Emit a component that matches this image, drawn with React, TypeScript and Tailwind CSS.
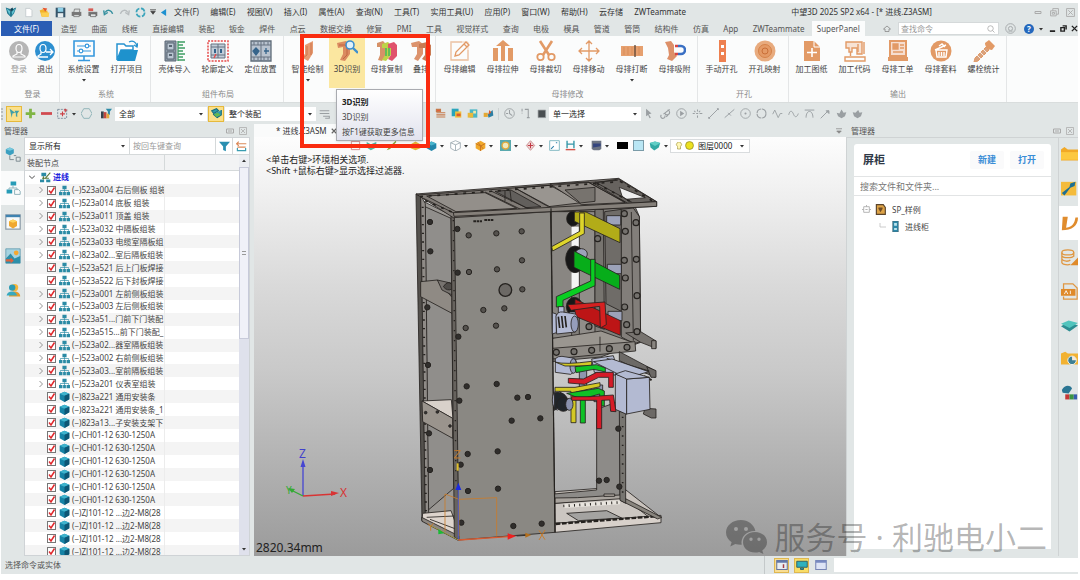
import React from "react";
import type { ReactNode } from "react";

type SvgProps = { box?: string; className?: string; children: ReactNode };

function Svg({ box = "0 0 16 16", className = "size-3", children }: SvgProps) {
  return (
    <svg viewBox={box} className={`${className} shrink-0`} fill="none" aria-hidden="true">
      {children}
    </svg>
  );
}

function Caret({ className = "size-1" }: { className?: string }) {
  return (
    <Svg box="0 0 8 8" className={className}>
      <path d="M0 2h8L4 7z" fill="#333" />
    </Svg>
  );
}

function SelectBox({ label, value, className }: { label: string; value: string; className: string }) {
  return (
    <div className={`grid shrink-0 items-center bg-white ${className}`}>
      <select aria-label={label} className="col-start-1 row-start-1 h-full w-full min-w-0 appearance-none bg-transparent pl-1 text-[8px] leading-3 text-[#222]">
        <option>{value}</option>
      </select>
      <span className="pointer-events-none col-start-1 row-start-1 mr-1 justify-self-end">
        <Caret />
      </span>
    </div>
  );
}

/* ---------- title bar ---------- */

const quickIcons: { name: string; art: ReactNode }[] = [
  { name: "新建", art: <path d="M4 2h6l3 3v9H4z" fill="#fff" stroke="#b9c0c4" /> },
  {
    name: "打开",
    art: (
      <>
        <path d="M1 5l5-2 2 2h4l2 9H4z" fill="#f3b32b" />
        <path d="M3 8h12l-1 6H4z" fill="#fccf52" />
        <path d="M5 1l7 1-3 5z" fill="#e8542a" />
      </>
    ),
  },
  {
    name: "保存",
    art: (
      <>
        <path d="M1 1h14v14H1z" fill="#37566b" />
        <path d="M4 1h8v6H4z" fill="#8ed0e8" />
        <path d="M4 9h8v6H4z" fill="#e8eef0" />
      </>
    ),
  },
  {
    name: "打印",
    art: (
      <>
        <path d="M1 7h14v6H1z" fill="#777" />
        <path d="M5 3h8l-1 5H4zM4 11h8v3H4z" fill="#d8dcdc" stroke="#666" />
      </>
    ),
  },
  {
    name: "批量打印",
    art: (
      <>
        <path d="M2 2h7v4H2z" fill="#d65b54" />
        <path d="M2 7h13v6H2z" fill="#777" />
        <path d="M5 10h8v4H5z" fill="#e2e5e5" stroke="#555" />
      </>
    ),
  },
  { name: "撤销", art: <path d="M3 8c3-5 9-4 11 2M1 5l1 6 5-3" stroke="#35909f" strokeWidth="2" /> },
  { name: "重做", art: <path d="M13 8C10 3 4 4 2 10M15 5l-1 6-5-3" stroke="#b7bcbe" strokeWidth="2" /> },
  { name: "刷新", art: <circle cx="8" cy="8" r="6" stroke="#3ba4bb" strokeWidth="2.4" strokeDasharray="7 2.4" /> },
];

const menus = ["文件(F)", "编辑(E)", "视图(V)", "插入(I)", "属性(A)", "查询(N)", "工具(T)", "实用工具(U)", "应用(P)", "窗口(W)", "帮助(H)", "云存储", "ZWTeammate"];

function TitleBar() {
  return (
    <header className="flex h-[18px] shrink-0 items-center text-[8px] leading-3 text-[#333]">
      <span className="flex w-[19px] shrink-0 justify-center">
        <Svg>
          <path d="M1 2l6 2v4l5-5 3-1-3 8-4 5-5-5z" fill="#22788f" />
          <path d="M2 3l5 4-1 5zM9 8l5-5-4 9z" fill="#65c5d4" />
          <path d="M7 4l3-2 1 3-4 3z" fill="#0c4257" />
        </Svg>
      </span>
      {quickIcons.map((q) => (
        <button key={q.name} aria-label={q.name} className="flex w-4 shrink-0 justify-center">
          <Svg className="size-[11px]">{q.art}</Svg>
        </button>
      ))}
      <button aria-label="自定义" className="flex w-[10px] shrink-0 justify-center">
        <Svg box="0 0 8 8" className="size-[6px]">
          <path d="M0 1h8M1 3h6L4 7z" stroke="#444" fill="#444" />
        </Svg>
      </button>
      <button aria-label="折叠" className="mr-[6px] flex w-[10px] shrink-0 justify-center">
        <Svg box="0 0 8 8" className="size-[7px]">
          <path d="M7 0v8L1 4z" fill="#1d91d0" />
        </Svg>
      </button>
      <nav className="flex w-[512px] shrink-0 justify-between">
        {menus.map((m) => (
          <button key={m} className="whitespace-nowrap">
            {m}
          </button>
        ))}
      </nav>
      <h1 className="mr-[98px] ml-auto shrink-0 whitespace-nowrap">中望3D 2025 SP2 x64 - [* 进线.Z3ASM]</h1>
      <button aria-label="最小化" className="flex w-4 shrink-0 justify-center">
        <Svg className="size-2">
          <path d="M2 7h12v4H2z" stroke="#aaa" strokeWidth="2" />
        </Svg>
      </button>
      <button aria-label="还原" className="flex w-4 shrink-0 justify-center">
        <Svg className="size-[9px]">
          <path d="M1 5h10v9H1zM5 5V1h10v10h-4M4 8h4v3H4z" stroke="#aaa" strokeWidth="1.6" />
        </Svg>
      </button>
      <button aria-label="关闭" className="flex w-4 shrink-0 justify-center">
        <Svg className="size-[9px]">
          <path d="M1 1h14v14H1zM4 4l8 8M12 4l-8 8" stroke="#aaa" strokeWidth="1.6" />
        </Svg>
      </button>
    </header>
  );
}

/* ---------- ribbon tabs ---------- */

const tabs = ["造型", "曲面", "线框", "直接编辑", "装配", "钣金", "焊件", "点云", "数据交换", "修复", "PMI", "工具", "视觉样式", "查询", "电极", "模具", "管道", "管筒", "结构件", "仿真", "App", "ZWTeammate"];

function TabBar() {
  return (
    <div className="flex h-[15px] shrink-0 items-stretch text-[8px] leading-3 text-[#555]">
      <button className="mr-[2px] w-[51px] shrink-0 bg-[#2a5db4] text-white">文件(F)</button>
      <nav className="flex w-[811px] shrink-0 justify-between">
        {tabs.map((t) => (
          <button key={t} className="shrink-0 px-[7px] whitespace-nowrap">
            {t}
          </button>
        ))}
        <button className="shrink-0 bg-[#fbfcfc] px-[5px] whitespace-nowrap">SuperPanel</button>
      </nav>
      <div className="ml-auto flex shrink-0 items-center">
        <button aria-label="主页" className="mr-[7px]">
          <Svg className="size-2">
            <path d="M1 8l7-6 7 6h-3v5H4V8z" stroke="#888" strokeWidth="1.6" />
          </Svg>
        </button>
        <div className="flex h-[13px] w-[101px] items-center border border-[#d5d9da] bg-white pr-[3px]">
          <input aria-label="查找命令" placeholder="查找命令" className="min-w-0 flex-1 bg-transparent pl-[2px] text-[8px] leading-3 placeholder:text-[#999]" />
          <Svg className="size-2">
            <circle cx="7" cy="7" r="5.5" stroke="#aaa" strokeWidth="1.6" />
            <path d="M11 11l4 4" stroke="#aaa" strokeWidth="1.6" />
          </Svg>
        </div>
        <button aria-label="反馈" className="mr-2 ml-[6px]">
          <Svg className="size-[11px]">
            <circle cx="8" cy="8" r="7" stroke="#a5aaac" strokeWidth="1.4" />
            <circle cx="8" cy="8" r="3" stroke="#a5aaac" strokeWidth="1.4" />
            <path d="M4 11c2 2 6 2 8 0" stroke="#a5aaac" />
          </Svg>
        </button>
        <button aria-label="帮助" className="mr-[5px] flex size-[10px] items-center justify-center rounded-full bg-[#2468bd] text-[8px] leading-none font-bold text-white">
          ?
        </button>
        <Caret />
        <button aria-label="最小化文档" className="ml-[6px]">
          <Svg box="0 0 8 8" className="size-[7px]">
            <path d="M1 7h6" stroke="#222" strokeWidth="2" />
          </Svg>
        </button>
        <button aria-label="还原文档" className="ml-1">
          <Svg box="0 0 8 8" className="size-[7px]">
            <path d="M1 3h4v4H1zM3 1h4v4" stroke="#222" strokeWidth="1.6" />
          </Svg>
        </button>
        <button aria-label="关闭文档" className="ml-1">
          <Svg box="0 0 8 8" className="size-[7px]">
            <path d="M1 1l6 6M7 1L1 7" stroke="#222" strokeWidth="1.6" />
          </Svg>
        </button>
      </div>
    </div>
  );
}

/* ---------- ribbon ---------- */

const O = "#e29a66";

const art = {
  user: (
    <>
      <circle cx="11" cy="11" r="10" fill="#b5b5b5" />
      <ellipse cx="11" cy="8.5" rx="3" ry="4" stroke="#fff" strokeWidth="1.2" />
      <path d="M9 12v2l-4 2v1h12v-1l-4-2v-2" stroke="#fff" strokeWidth="1.2" />
    </>
  ),
  logout: (
    <>
      <circle cx="11" cy="11" r="10" fill="#2d8fd0" />
      <ellipse cx="9" cy="8.5" rx="3" ry="4" stroke="#fff" strokeWidth="1.2" />
      <path d="M7 12v2l-3 2v1h10M12 12h7M16 9l3 3-3 3" stroke="#fff" strokeWidth="1.3" />
    </>
  ),
  settings: (
    <>
      <path d="M1 1h20v15H1zM11 16v4M5 20.500h12" stroke="#3798dd" strokeWidth="1.6" />
      <path d="M4 6h14M4 11h14" stroke="#3798dd" strokeWidth="1.2" />
      <circle cx="14" cy="6" r="1.8" fill="#fff" stroke="#3798dd" strokeWidth="1.2" />
      <circle cx="8" cy="11" r="1.8" fill="#fff" stroke="#3798dd" strokeWidth="1.2" />
    </>
  ),
  folder: (
    <>
      <path d="M1 20V4h7l2 2h7v4H5z" fill="#fff" stroke="#2793cf" strokeWidth="1.5" />
      <path d="M5 10h17l-3 11H1z" fill="#1e92cd" />
      <path d="M13 2c4-2 7 0 8 4M22 3l-1 4-3-2" stroke="#2793cf" strokeWidth="1.3" />
    </>
  ),
  shell: (
    <>
      <path d="M1 1h11v20H1z" fill="#8d99a6" stroke="#5a6674" />
      <path d="M3 3h7v7H3zM3 12h7v7H3z" fill="#bac6d2" stroke="#5a6674" />
      <path d="M5 6h3M5 15h3" stroke="#394653" strokeWidth="1.5" />
      <path d="M14 1v20M14 2h7M14 5h5M14 8h7M14 11h5M14 14h7M14 17h5M14 20h7" stroke="#3f9d63" strokeWidth="1.3" />
    </>
  ),
  outline: (
    <>
      <path d="M1 1h20v20H1z" stroke="#e64a4a" strokeWidth="1.5" strokeDasharray="2 1.2" />
      <path d="M4 4h14v14H4z" fill="#c2ced9" stroke="#667381" />
      <path d="M11 4v14M4 7h14M4 15h14" stroke="#667381" />
      <path d="M7 9h2v4H7zM13 9h2v4h-2z" fill="#35648b" />
      <path d="M7 18l2-4" stroke="#e64a4a" strokeWidth="1.4" />
    </>
  ),
  place: (
    <>
      <path d="M1 1h20v20H1z" fill="#b8c3cf" stroke="#5f6c79" strokeWidth="1.3" />
      <path d="M11 1v20M1 5h20M1 17h20M4 2v3M8 2v3M14 2v3M18 2v3M4 17v3M8 17v3M14 17v3M18 17v3" stroke="#667381" />
      <path d="M6 8l3 3-3 4-3-4zM16 8v6M14 11h5" fill="#35648b" stroke="#35648b" strokeWidth="1.3" />
    </>
  ),
  smart: (
    <>
      <path d="M8 5l8-4v12l-5 8-7-4 4-3z" fill="#e59b72" />
      <path d="M10 6v9l-4 3M14 3v12" stroke="#cf754a" />
    </>
  ),
  recog: (
    <>
      <path d="M1 3l9-2 4 4v9l-5 7-5-1 3-6V7L2 8z" fill="#db8b60" />
      <path d="M3 5h6l2 2v8l-4 4" stroke="#c26740" />
      <circle cx="14" cy="5" r="4" fill="#dff1fb" stroke="#3e8fce" strokeWidth="1.6" />
      <path d="M17 8l5 5" stroke="#3e8fce" strokeWidth="2.4" />
    </>
  ),
  copy: (
    <>
      <path d="M1 3l6-2 3 3v11l-4 6-4-1 2-5V7H1z" fill="#d69167" />
      <path d="M6 4l6-2 3 3v10l-5 6-4-1 3-5V8H6z" fill="#bed347" />
      <path d="M12 4l6-2 3 3v11l-5 5-4-2 3-4V8h-3z" fill="#e0526c" />
      <path d="M10 8v8M13 8v8" stroke="#45b65b" strokeWidth="1.5" />
    </>
  ),
  stack: (
    <>
      <path d="M1 3l8-2 4 3v10l-5 7-4-2 3-5V7H2z" fill="#dc936d" />
      <path d="M9 4l8-2 4 3v10l-5 6-4-2 3-4V8H9z" fill="#c97a53" />
    </>
  ),
  edit: (
    <>
      <path d="M19 10v10H2V2h11" stroke="#eabd9b" strokeWidth="1.3" />
      <path d="M2 2h17v18" stroke="#f0d2bd" />
      <path d="M6 16l1-4L17 2l3 3L10 15zM15 4l3 3" stroke={O} strokeWidth="1.3" />
    </>
  ),
  stretch: <path d="M11 0l7 6H4zM1 8h5v13H1zM9 5h4v16H9zM16 8h5v13h-5z" fill={O} />,
  scissors: (
    <>
      <path d="M5 1l9 14M17 1L8 15" stroke={O} strokeWidth="2.6" />
      <circle cx="5.500" cy="17" r="3.200" stroke={O} strokeWidth="1.8" />
      <circle cx="16.500" cy="17" r="3.200" stroke={O} strokeWidth="1.8" />
    </>
  ),
  move: <path d="M11 1v20M1 11h20M8 4l3-3 3 3M8 18l3 3 3-3M4 8l-3 3 3 3M18 8l3 3-3 3" stroke={O} strokeWidth="1.3" />,
  brk: (
    <>
      <path d="M0 6h22v10H0z" fill="#e6a06f" />
      <path d="M14 5v12" stroke="#5c4535" strokeWidth="1.300" />
      <path d="M3 7v8M7 7v8M11 7v8M18 7v8" stroke="#d98d58" />
    </>
  ),
  snap: (
    <>
      <path d="M1 2l6-1 3 4v7l3 4-5 5-5-2 2-4-1-7z" fill="#dd9069" />
      <path d="M14 6h3a4 4 0 0 1 0 8h-3" stroke="#3a70c4" strokeWidth="2.6" />
      <path d="M11 6h3M11 14h3" stroke="#d84444" strokeWidth="2.6" />
    </>
  ),
  hole: (
    <>
      <path d="M8 0h7v22H8z" fill="#ee8050" />
      <path d="M10 5h3v3h-3zM10 12h3v3h-3z" fill="#fff" />
    </>
  ),
  map: (
    <>
      <circle cx="11" cy="11" r="10.500" fill="#e8ab7e" />
      <circle cx="11" cy="11" r="6.500" fill="#e49a66" stroke="#d58249" />
      <circle cx="11" cy="11" r="3" stroke="#c96f38" />
    </>
  ),
  sheet: (
    <>
      <path d="M3 1h10l6 6v14H3z" fill={O} />
      <path d="M13 1v6h6" stroke="#fff" />
      <path d="M11 8v9M6 12.500h10" stroke="#fff" strokeWidth="1.600" />
    </>
  ),
  sewing: (
    <>
      <path d="M2 2h16v12h-5V8H8v4H5V8H2z" fill="#f7e3d5" stroke={O} strokeWidth="1.400" />
      <path d="M1 17h20v4H1zM20 2v12M6.500 12v4M14 4v8" stroke={O} strokeWidth="1.400" />
    </>
  ),
  order: (
    <>
      <path d="M3 1h16v15H3z" fill="#f6ded0" stroke={O} strokeWidth="2" />
      <path d="M6 4h5v5H6zM13 5h4M13 8h4M6 12h10" fill={O} stroke={O} strokeWidth="1.300" />
      <path d="M1 17h20v4H1z" fill={O} />
    </>
  ),
  nest: (
    <>
      <circle cx="11" cy="11" r="10.500" fill={O} />
      <path d="M5 10l11-5M6 10h11l-1 7H7zM9 12v4M11.500 12v4M14 12v4M9 6l3-2 3 3" stroke="#fff" strokeWidth="1.400" />
    </>
  ),
  bolt: (
    <>
      <path d="M12 3l4-3 6 6-3 4c-4 0-7-3-7-7z" fill={O} />
      <path d="M13 7l3 3L5 21l-4 1 1-4z" fill="#dba27c" stroke={O} />
      <path d="M10 9l4 4M7 12l4 4M4 15l4 4" stroke="#fff" strokeWidth=".8" />
    </>
  ),
};

type Tool = { label: string; icon: ReactNode; w?: string; drop?: boolean; on?: boolean; dim?: boolean };

function ToolButton({ label, icon, w = "w-[43px]", drop, on, dim }: Tool) {
  return (
    <button className={`flex h-[52px] shrink-0 flex-col items-center pt-1 ${w} ${on ? "bg-[#fbe7a0]" : ""}`}>
      <Svg box="0 0 22 22" className="size-[22px]">
        {icon}
      </Svg>
      <span className={`mt-[2px] text-[8px] leading-[10px] whitespace-nowrap ${dim ? "text-[#999]" : "text-[#444]"}`}>{label}</span>
      {drop && (
        <span className="mt-1">
          <Caret />
        </span>
      )}
    </button>
  );
}

function Group({ title, tools, className }: { title: string; tools: Tool[]; className: string }) {
  return (
    <section className={`flex shrink-0 flex-col overflow-hidden border-r border-[#e4e6e7] ${className}`}>
      <div className="flex">
        {tools.map((t) => (
          <ToolButton key={t.label} {...t} />
        ))}
      </div>
      <h2 className="text-center text-[8px] leading-3 text-[#8a8a8a]">{title}</h2>
    </section>
  );
}

function Ribbon() {
  return (
    <div className="flex h-[67px] shrink-0 overflow-hidden border-b border-[#d9dddd] bg-[#fbfcfc]">
      <Group
        title="登录"
        className="w-[59px] pl-[5px]"
        tools={[
          { label: "登录", icon: art.user, w: "w-[26px]", dim: true },
          { label: "退出", icon: art.logout, w: "w-[26px]" },
        ]}
      />
      <Group
        title="系统"
        className="w-[91px] pl-[2px]"
        tools={[
          { label: "系统设置", icon: art.settings, drop: true },
          { label: "打开项目", icon: art.folder },
        ]}
      />
      <Group
        title="组件布局"
        className="w-[133px] pl-[2px]"
        tools={[
          { label: "壳体导入", icon: art.shell },
          { label: "轮廓定义", icon: art.outline },
          { label: "定位放置", icon: art.place },
        ]}
      />
      <Group
        title=""
        className="w-[152px] pr-[10px] pl-[2px]"
        tools={[
          { label: "智能绘制", icon: art.smart, drop: true },
          { label: "3D识别", icon: art.recog, w: "w-9", on: true },
          { label: "母排复制", icon: art.copy },
          { label: "叠排", icon: art.stack, w: "w-[26px]" },
        ]}
      />
      <Group
        title="母排修改"
        className="w-[262px] pl-[2px]"
        tools={[
          { label: "母排编辑", icon: art.edit },
          { label: "母排拉伸", icon: art.stretch },
          { label: "母排裁切", icon: art.scissors },
          { label: "母排移动", icon: art.move },
          { label: "母排打断", icon: art.brk, drop: true },
          { label: "母排吸附", icon: art.snap },
        ]}
      />
      <Group
        title="开孔"
        className="w-[91px] pl-[2px]"
        tools={[
          { label: "手动开孔", icon: art.hole },
          { label: "开孔映射", icon: art.map },
        ]}
      />
      <Group
        title="输出"
        className="w-[218px] pl-[1px]"
        tools={[
          { label: "加工图纸", icon: art.sheet },
          { label: "加工代码", icon: art.sewing },
          { label: "母排工单", icon: art.order },
          { label: "母排套料", icon: art.nest },
          { label: "螺栓统计", icon: art.bolt },
        ]}
      />
    </div>
  );
}

/* ---------- selection toolbar ---------- */

const G = "#9a9fa2";

const colorTools: { name: string; art: ReactNode }[] = [
  { name: "列表", art: <path d="M2 2h6v3H2zM2 7h13M2 10h13M2 13h13" stroke="#c67a4b" fill="#e2623a" strokeWidth="1.6" /> },
  {
    name: "复制",
    art: (
      <>
        <path d="M1 1h10v11H1z" fill="#2aa5bb" />
        <path d="M6 5h9v9H6z" fill="#f2c13c" />
        <path d="M8 8h6v4H8z" fill="#df5a2c" />
      </>
    ),
  },
  {
    name: "粘贴",
    art: (
      <>
        <path d="M4 2h11v12H4z" fill="#49b6c6" />
        <path d="M1 7h8v7H1z" fill="#e9b93b" />
        <path d="M9 4h4v4H9z" fill="#f5e8a6" />
      </>
    ),
  },
  {
    name: "变换",
    art: (
      <>
        <path d="M1 7h6v6H1z" fill="#e5a934" />
        <path d="M7 9l7-6 1 8-7 3z" fill="#2c7fa4" />
        <path d="M9 3l3 3-4 4z" fill="#df5a2c" />
      </>
    ),
  },
];

const grayTools: { name: string; art: ReactNode }[] = [
  { name: "选取", art: <path d="M3 1l8 7-4 1 3 5-2 1-2-5-3 2z" fill={G} /> },
  { name: "设置", art: <path d="M2 10a3 3 0 1 0 5 1M7 7a3.500 3.500 0 1 0 4-4M5 9l9-7M12 10l-3 3" stroke={G} strokeWidth="1.600" /> },
  {
    name: "播放",
    art: (
      <>
        <circle cx="8" cy="8" r="7" stroke={G} strokeWidth="1.300" />
        <path d="M6 4l6 4-6 4z" fill={G} />
      </>
    ),
  },
  { name: "点", art: <path d="M1 8h3M6 8h3M11 8h4M8 2v3M8 11v3M3 4l2 2M12 4l-2 2" stroke={G} strokeWidth="1.500" /> },
  { name: "直线", art: <path d="M1 15L15 1M1 13v2h2M13 1h2v2" stroke={G} strokeWidth="1.400" /> },
  { name: "中点", art: <path d="M1 14L15 2M6 7l4 4" stroke={G} strokeWidth="1.400" /> },
  {
    name: "圆心",
    art: (
      <>
        <circle cx="8" cy="8" r="7" stroke={G} strokeWidth="1.200" />
        <circle cx="8" cy="8" r="1.500" fill={G} />
      </>
    ),
  },
  { name: "象限", art: <circle cx="8" cy="8" r="6.500" stroke={G} strokeWidth="1.600" strokeDasharray="9 1.200" /> },
  { name: "折线", art: <path d="M1 9l3-6 5 11 3-6h3" stroke={G} strokeWidth="1.300" /> },
  { name: "曲线", art: <path d="M1 10c2-8 5-6 7-1s5 5 7-1" stroke={G} strokeWidth="1.300" /> },
  { name: "切线", art: <path d="M1 3h14M3 14c0-12 10-12 10 0" stroke={G} strokeWidth="1.400" /> },
  { name: "方向", art: <path d="M1 15L12 4M9 4h4v4z" stroke={G} fill={G} strokeWidth="1.400" /> },
  { name: "曲面", art: <path d="M1 7l4 1 3-6 3 5 4-1-2 6-5 3-5-3z" fill={G} /> },
  { name: "面", art: <path d="M1 6l4 1 4-4 2 4 4-1-2 6-5 3-5-3z" fill={G} /> },
];

function ToolIcon({ name, children, className = "w-4" }: { name: string; children: ReactNode; className?: string }) {
  return (
    <button aria-label={name} className={`flex h-4 shrink-0 items-center justify-center ${className}`}>
      <Svg className="size-[11px]">{children}</Svg>
    </button>
  );
}

function SelectionBar() {
  return (
    <div className="flex h-[21px] shrink-0 items-center">
      <span className="mr-[3px] h-3 w-[2px] border-l-2 border-dotted border-[#b9bec0]" />
      <ToolIcon name="选择" className="w-4 border border-[#e6b93c] bg-[#fbe08a]">
        <path d="M1 1l8 6-4 1-1 6zM8 4h7l-3 4v5l-2-1V8z" fill="#3f9fa9" />
      </ToolIcon>
      <ToolIcon name="添加">
        <path d="M6 1h4v5h5v4h-5v5H6v-5H1V6h5z" fill="#7fb544" />
      </ToolIcon>
      <ToolIcon name="移除">
        <path d="M0 6h16v4H0z" fill="#d14a4f" />
      </ToolIcon>
      <ToolIcon name="框选">
        <path d="M1 2h13v13H1z" stroke="#5d7388" strokeDasharray="3 1.500" />
        <path d="M8 5v7M4.500 8.500h7M12 1v5M10 3h5" stroke="#cb3f44" strokeWidth="1.600" />
      </ToolIcon>
      <span className="mx-[2px]">
        <Caret />
      </span>
      <ToolIcon name="多边形">
        <path d="M4 1h8l4 7-4 7H4L0 8z" stroke="#8ab0b5" strokeWidth="1.300" />
      </ToolIcon>
      <ToolIcon name="过滤" className="ml-[3px] w-[18px]">
        <path d="M0 5h4v10H0z" fill="#35434d" />
        <path d="M4 6h4v9H4z" fill="#c4483e" />
        <path d="M8 8h4v7H8z" fill="#e2a93c" />
        <path d="M7 1h9l-3 4v5l-3-2V5z" fill="#2d8ba7" />
      </ToolIcon>
      <SelectBox label="过滤类型" value="全部" className="h-[14px] w-[92px]" />
      <ToolIcon name="装配范围" className="mx-px w-4 border border-[#e6b93c] bg-[#fbe08a]">
        <path d="M1 4l7-3 3 3-7 4zM3 9l6 5 6-4V3" fill="#2f9bab" stroke="#176c80" strokeWidth="1.500" />
        <path d="M4 9l6-2 4 3-6 3z" fill="#64b84e" />
      </ToolIcon>
      <SelectBox label="装配范围列表" value="整个装配" className="h-[14px] w-[91px]" />
      <ToolIcon name="对齐">
        <path d="M1 4h14M1 8h14M6 12h9v3H9" stroke={G} strokeWidth="1.500" />
      </ToolIcon>
      <span className="w-[100px] shrink-0" />
      {colorTools.map((t) => (
        <ToolIcon key={t.name} name={t.name}>
          {t.art}
        </ToolIcon>
      ))}
      <span className="mx-[2px] h-3 w-px shrink-0 bg-[#cdd2d3]" />
      <ToolIcon name="历史">
        <circle cx="8" cy="8" r="7" stroke={G} strokeWidth="1.300" />
        <path d="M8 3v5l4 3M3 8h3" stroke={G} strokeWidth="1.500" />
      </ToolIcon>
      <ToolIcon name="捕捉">
        <path d="M3 1v4M3 7v1M7 2h5v12M10 14h4" stroke={G} strokeWidth="1.500" />
      </ToolIcon>
      <ToolIcon name="实体">
        <path d="M3 3h11v11H3z" fill="#4a4f52" stroke="#9a9fa2" />
      </ToolIcon>
      <SelectBox label="选择方式" value="单一选择" className="h-[14px] w-[92px]" />
      {grayTools.map((t) => (
        <ToolIcon key={t.name} name={t.name}>
          {t.art}
        </ToolIcon>
      ))}
    </div>
  );
}

/* ---------- left manager ---------- */

const sideIcons: { name: string; art: ReactNode }[] = [
  {
    name: "历史",
    art: (
      <>
        <path d="M1 4l5-2 5 2v5l-5 3-5-3z" fill="#3a9fc0" />
        <path d="M1 4l5 2 5-2-5-2z" fill="#79c9dd" />
        <path d="M6 12v5h5M11 12h3M14 14h5v5h-5z" stroke="#7c8a90" strokeWidth="1.200" />
      </>
    ),
  },
  {
    name: "装配",
    art: (
      <>
        <path d="M7 2h7v5H7zM2 12h7v5H2z" fill="#279cb7" />
        <path d="M12 12h5l2 2v4h-7zM10 7v3M5 12v-2h10v2" stroke="#8fb2ba" strokeWidth="1.200" />
      </>
    ),
  },
  {
    name: "视图",
    art: (
      <>
        <path d="M1 1h18v18H1z" fill="#f8fafa" stroke="#8c9ca8" strokeWidth="1.500" />
        <path d="M1 1h18v3H1z" fill="#3f83b0" />
        <path d="M5 9l5-2 5 2v6l-5 3-5-3z" fill="#f0a830" />
        <path d="M5 9l5 2 5-2-5-2z" fill="#ffd45c" />
      </>
    ),
  },
  {
    name: "视觉",
    art: (
      <>
        <path d="M1 1h18v18H1z" fill="#a6d3e0" stroke="#5f98ad" />
        <path d="M1 13l6-6 5 6 7-3v9H1z" fill="#2d8fa9" />
        <circle cx="14" cy="6" r="3" fill="#f5a82e" />
        <path d="M1 14h6v-2l4 4-4 3v-2H1z" fill="#e0623c" />
      </>
    ),
  },
  {
    name: "用户",
    art: (
      <>
        <circle cx="12" cy="7" r="4.500" fill="#f3b53a" />
        <path d="M5 18c0-8 14-8 14 0z" fill="#e59a29" />
        <circle cx="9" cy="7" r="4" fill="#2b9bb3" />
        <path d="M2 17c1-7 12-7 13 0z" fill="#36a9bf" />
      </>
    ),
  },
];

type Node = { text: string; part?: boolean; open?: boolean };

const nodes: Node[] = [
  { text: "(−)523a004 右后侧板 组装", open: true },
  { text: "(−)523a014 底板 组装", open: true },
  { text: "(−)523a011 顶盖 组装", open: true },
  { text: "(−)523a032 中隔板组装", open: true },
  { text: "(−)523a033 电缆室隔板组", open: true },
  { text: "(−)823a02...室后隔板组装", open: true },
  { text: "(−)523a521 后上门板焊接" },
  { text: "(−)523a522 后下封板焊接" },
  { text: "(−)523a001 左前侧板组装", open: true },
  { text: "(−)523a003 左后侧板组装", open: true },
  { text: "(−)523a51...门前下门装配", open: true },
  { text: "(−)523a515...前下门装配_", open: true },
  { text: "(−)523a02...器室隔板组装", open: true },
  { text: "(−)523a002 右前侧板组装", open: true },
  { text: "(−)523a03...室前隔板组装", open: true },
  { text: "(−)523a201 仪表室组装", open: true },
  { text: "(−)823a221 通用安装条", part: true },
  { text: "(−)823a221 通用安装条_1", part: true },
  { text: "(−)823a13...子安装支架下", part: true },
  ...Array.from({ length: 6 }, () => ({ text: "(−)CH01-12 630-1250A", part: true })),
  ...Array.from({ length: 4 }, () => ({ text: "(−)ZJ101-12 ...边2-M8(28", part: true })),
];

function OrgIcon() {
  return (
    <Svg className="size-[11px]">
      <path d="M5 1h6v5H5zM0 10h5v5H0zM6 10h4v5H6zM11 10h5v5h-5z" fill="#2b8ba5" />
      <path d="M8 6v4M2 10V8h12v2" stroke="#2b8ba5" />
    </Svg>
  );
}

function CubeIcon() {
  return (
    <Svg className="size-[11px]">
      <path d="M1 4l7-3 7 3v8l-7 4-7-4z" fill="#1683a6" />
      <path d="M1 4l7-3 7 3-7 3z" fill="#3fb3cd" />
      <path d="M8 7l7-3v8l-7 4z" fill="#0d5675" />
    </Svg>
  );
}

function TreeRow({ node, index }: { node: Node; index: number }) {
  const id = `node-${index}`;
  return (
    <li className="grid min-h-0 grid-cols-[140px_1fr] odd:bg-white even:bg-[#f4f4f4]">
      <span className="flex min-w-0 items-center overflow-hidden border-r border-[#ececec] pl-[13px]">
        <span className="flex w-[9px] shrink-0">
          {node.open && (
            <Svg box="0 0 8 8" className="size-[6px]">
              <path d="M2 0l4 4-4 4" stroke="#888" strokeWidth="1.200" />
            </Svg>
          )}
        </span>
        <span className="mr-[3px] grid size-[9px] shrink-0">
          <input id={id} type="checkbox" defaultChecked className="peer col-start-1 row-start-1 size-[9px] appearance-none border border-[#777] bg-white" />
          <svg viewBox="0 0 9 9" className="pointer-events-none invisible col-start-1 row-start-1 size-[9px] peer-checked:visible" fill="none" aria-hidden="true">
            <path d="M2 4.500l2 2.500 3.500-5.500" stroke="#e0282c" strokeWidth="1.500" />
          </svg>
        </span>
        {node.part ? <CubeIcon /> : <OrgIcon />}
        <label htmlFor={id} className="ml-[2px] text-[8px] leading-3 whitespace-nowrap text-[#444]">
          {node.text}
        </label>
      </span>
    </li>
  );
}

function PanelControls() {
  return (
    <>
      <button aria-label="停靠" className="ml-auto">
        <Svg className="size-2">
          <path d="M1 4h14v8H1zM4 8h8" stroke="#aaa" strokeWidth="2" />
        </Svg>
      </button>
      <button aria-label="关闭面板" className="ml-[5px]">
        <Svg className="size-2">
          <path d="M1 1h14v14H1zM4 4l8 8M12 4l-8 8" stroke="#aaa" strokeWidth="1.500" />
        </Svg>
      </button>
    </>
  );
}

function LeftManager() {
  return (
    <aside className="flex w-[249px] shrink-0 flex-col">
      <div className="flex h-[13px] shrink-0 items-center pr-[3px] pl-[3px] text-[8px] leading-[10px] text-[#555]">
        管理器
        <PanelControls />
      </div>
      <div className="flex min-h-0 flex-1">
        <nav className="flex w-[23px] shrink-0 flex-col">
          {sideIcons.map((s) => (
            <button key={s.name} aria-label={s.name} className={`flex h-[34px] items-center justify-center ${s.name === "装配" ? "bg-[#fafbfb]" : ""}`}>
              <Svg box="0 0 20 20" className="size-4">
                {s.art}
              </Svg>
            </button>
          ))}
        </nav>
        <div className="flex min-w-0 flex-1 flex-col border border-[#cfd3d6] bg-white">
          <div className="flex h-[17px] shrink-0 border-b border-[#d5d9da]">
            <SelectBox label="显示范围" value="显示所有" className="w-[105px] border-r border-[#d5d9da]" />
            <input aria-label="按回车键查询" placeholder="按回车键查询" className="min-w-0 flex-1 px-[3px] text-[8px] leading-3 placeholder:text-[#999]" />
            <button aria-label="筛选" className="flex w-[17px] items-center justify-center border-l border-[#d5d9da]">
              <Svg className="size-[11px]">
                <path d="M0 1h16l-6 7v7l-4-2V8z" fill="#2a8fb0" />
              </Svg>
            </button>
            <button aria-label="排序" className="flex w-[17px] items-center justify-center border-l border-[#d5d9da]">
              <Svg className="size-[11px]">
                <path d="M1 4h14M4 1L1 4l3 3M2 9h12" stroke="#dc8a5a" strokeWidth="1.700" />
                <path d="M2 10v4h12v-4" stroke="#3a9db1" strokeWidth="1.700" />
              </Svg>
            </button>
          </div>
          <div className="flex min-h-0 flex-1">
            <div className="flex min-w-0 flex-1 flex-col overflow-hidden">
              <div className="grid h-4 shrink-0 grid-cols-[140px_1fr] border-b border-[#d5d9da] bg-[#f2f3f4] text-[8px] leading-[15px] text-[#444]">
                <span className="border-r border-[#d5d9da] pl-[2px]">装配节点</span>
              </div>
              <ul className="grid h-[387px] shrink-0 grid-rows-[repeat(30,minmax(0,1fr))]">
                <li className="flex min-h-0 items-center gap-[5px] pl-1 text-[8px] leading-3 font-bold text-[#2222dd]">
                  <Svg box="0 0 8 8" className="size-[6px]">
                    <path d="M0 2l4 4 4-4" stroke="#444" strokeWidth="1.300" />
                  </Svg>
                  <span className="flex items-center gap-[2px]">
                    <Svg className="size-[11px]">
                      <path d="M2 1h7v5H2zM0 11h6v4H0zM9 11h6v4H9z" fill="#2b8ba5" />
                      <path d="M5 6v5M3 9h10M15 1L7 10" stroke="#5c7a3c" strokeWidth="1.600" />
                    </Svg>
                    进线
                  </span>
                </li>
                {nodes.map((n, i) => (
                  <TreeRow key={i} node={n} index={i} />
                ))}
              </ul>
            </div>
            <div className="flex w-[10px] shrink-0 flex-col items-center bg-[#dfe1ec]">
              <button aria-label="向上滚动" className="flex h-[12px] w-full rotate-180 items-center justify-center bg-[#eceef2]">
                <Caret />
              </button>
              <div className="flex h-[172px] w-[10px] items-center justify-center border border-[#c7cad9] bg-[#f0f1f8]">
                <span className="h-1 w-1 border-y border-[#999]" />
              </div>
              <button aria-label="向下滚动" className="mt-auto flex h-3 w-full items-center justify-center">
                <Caret />
              </button>
            </div>
          </div>
        </div>
      </div>
    </aside>
  );
}

/* ---------- cabinet model ---------- */

const frontBolts = [
  [206, 196], [289, 190], [365, 184], [366, 271], [291, 298], [207, 306], [367, 358], [250, 420], [313, 415], [197, 474], [288, 467],
];
const darkBolts = [
  [172, 177], [173, 308], [175, 500], [200, 649], [290, 642], [352, 683], [384, 681], [335, 752], [421, 745], [178, 692], [203, 852], [293, 844],
  [182, 884], [204, 963], [294, 956], [184, 1058], [340, 1068], [425, 1061], [620, 930], [597, 932], [655, 776], [658, 950],
  [90, 156], [91, 244], [82, 412], [84, 585], [87, 790], [90, 900],
];
const rimBolts = [
  [708, 158], [709, 268], [711, 377], [711, 485], [593, 206], [469, 547], [522, 545], [575, 541], [628, 536], [681, 532], [567, 470],
  [673, 131], [676, 184], [673, 271], [676, 324], [674, 411], [680, 464],
];

function Cabinet() {
  return (
    <svg viewBox="254 137 592 418" preserveAspectRatio="xMinYMin meet" className="absolute inset-0 size-full" fill="none" aria-hidden="true">
      <g transform="translate(400 170) scale(0.33333)" stroke="#25221f" strokeWidth="2.500" strokeLinejoin="round">
        {/* lower floor frame */}
        <path d="M465 965l200-15 118 92-318 30z" fill="#c9c3bd" />
        <path d="M465 1000l205-18 75 58-280 20z" fill="#cbc6c1" />
        <path d="M500 1030l120-8 45 22-130 8z" fill="#a4a3a1" />
        <path d="M465 1060l318-24v22l-318 29z" fill="#d8d1cb" />
        <path d="M467 1062l300-23" strokeWidth="7" strokeDasharray="14 5" />
        <path d="M465 974l200-13v25l-200 14z" fill="#a8a39d" />
        <path d="M490 1008l170-11" stroke="#e8e4de" strokeWidth="12" />
        <path d="M490 1008l170-11" strokeWidth="8" strokeDasharray="3 13" />
        <path d="M665 980l120 62-12 5-110-55z" fill="#89857e" />
        {/* lower back panel and post */}
        <path d="M590 718l70-25v282l-128 8-70 1v-12l128-12z" fill="#8d8b88" />
        <path d="M658 725h19v275l-17-9z" fill="#777570" />
        <path d="M668 740v230" strokeWidth="5" strokeDasharray="4 24" />
        <path d="M612 972h32v7h-32z" fill="#aaa59e" />
        {/* upper back panels */}
        <path d="M453 110l250-5 15 34 4 378-120 44-149 14z" fill="#817e7a" />
        <path d="M453 125h62v380h-62z" fill="#898682" />
        <path d="M514 170h24v190h-24z" fill="#f4f4f4" stroke="none" />
        <path d="M538 125h47v370h-47z" fill="#908d89" />
        <path d="M585 118h25l3 360-28-10z" fill="#77746f" />
        <path d="M614 125l50-7 4 308-50-25z" fill="#6f6c68" />
        <path d="M664 118l36-4 18 26 4 375-20 6-38-20z" fill="#827e7a" />
        <path d="M694 126l6 386" />
        <path d="M722 485l46 28v22l-46-18-45-28z" fill="#77736f" />
        <path d="M755 512h13v24h-13z" fill="#8a8681" />
        {/* partition shelf */}
        <path d="M458 505l145-22 100 36-248 22z" fill="#9a9690" />
        <path d="M457 535l248-20 2 28-249 24z" fill="#8e8a85" />
        {/* lower mount rails */}
        <path d="M600 500v45M658 545l107 57v20l-107-50z" fill="#6c6966" />
        <path d="M620 560l140 73" strokeWidth="6" strokeDasharray="8 10" />
        <path d="M740 590l28 12v20h-15zM735 715l33 2v27h-14l-24-12z" fill="#6c6966" />
        {/* left side */}
        <path d="M62 90l96 48 15 960-92-70z" fill="#9a9793" />
        <path d="M75 110l78 35 8 810-76 65z" fill="#908e8b" />
        <path d="M48 72l14 3 15 975-11 1z" fill="#54514d" />
        <path d="M62 75l14 26 10 938-10 12z" fill="#8f8b87" />
        <path d="M68 110l10 930" strokeWidth="6" strokeDasharray="4 22" />
        <path d="M62 335l50-5 44 52v48l-94-50z" fill="#8f8a84" />
        <path d="M112 330l44 10v35l-30-15z" fill="#77736f" />
        <path d="M130 350q15-22 26-5v12q-14 8-26-7z" fill="#4f4c49" />
        <path d="M66 693l88-4 5 57z" fill="#d8d1ca" />
        <path d="M66 693l92 52v60l-90-50z" fill="#9a948d" />
        <circle cx="77" cy="728" r="4" fill="#333" />
        <circle cx="112" cy="726" r="4" fill="#333" />
        <circle cx="150" cy="768" r="4" fill="#333" />
        <path d="M68 1030l85-8 22 60v28L66 1052z" fill="#ddd4cd" />
        <path d="M80 1042l82-4M90 1048l75 28" />
        <path d="M65 1042l110 55v14L66 1054z" fill="#8c8680" />
        <path d="M153 135l13 4 11 971-14-8z" fill="#67635e" />
        <path d="M160 150l8 800" strokeWidth="4" strokeDasharray="4 26" />
        {/* front panel */}
        <path d="M163 133l288-18 4 200 10 772-288 23z" fill="#8a8883" />
        {/* top frame */}
        <path d="M48 72l608-47 114 70v14l-320 16-290 18z" fill="#817c77" />
        <path d="M80 78l175-10 95 47-182 10z" fill="#938f8a" />
        <path d="M345 54l105-8 95 52-100 12z" fill="#999590" />
        <path d="M285 64l48-4 90 50-45 3z" fill="#625f5c" />
        <path d="M315 63v30M330 60l4 35" />
        <path d="M450 42l115-6 110 62-130 6z" fill="#8b8681" />
        <path d="M495 60l90-8v42l-44 5z" fill="#77736e" />
        <path d="M655 27l114 68-86 5-102-60z" fill="#67635f" />
        <path d="M658 52l78 31-58 5-12-10z" fill="#eee" />
        <path d="M53 75l600-44M70 85l100 48M255 66l107 52M275 64l110 52M345 54l108 58M565 37l112 60M585 36l110 60" />
        <path d="M60 80l585-44M75 92l90 38M590 40l110 60M660 34l96 58" strokeWidth="5" strokeDasharray="9 17" />
        <path d="M160 128l290-16 320-17v14l-320 16-288 14z" fill="#85807a" />
        <path d="M453 115l12 972" strokeWidth="3.500" />
        <path d="M220 154h26M253 150h27" strokeWidth="6" strokeDasharray="8 2" />
        {/* insulators and bus bars */}
        <g fill="#171717">
          <ellipse cx="519" cy="146" rx="19" ry="22" />
          <ellipse cx="525" cy="268" rx="28" ry="40" />
          <ellipse cx="523" cy="410" rx="24" ry="28" />
        </g>
        <g fill="#9ca2b9">
          <path d="M620 137h42v28h-42zM622 283h42v28h-42zM624 424h42v28h-42z" />
          <ellipse cx="544" cy="252" rx="18" ry="16" />
        </g>
        <path d="M523 126h35l102 50v42l-137-64z" fill="#b2ac18" />
        <path d="M455 230l84-46v-55h14v62l-95 52z" fill="#ded52b" />
        <path d="M522 243l137 73v42l-137-66z" fill="#07ad1a" />
        <path d="M572 268h13v79l-96 44v20h-20v-31l103-47z" fill="#09ce22" />
        <path d="M525 387l136 65v44l-137-58z" fill="#bd1516" />
        <path d="M503 404l112-8 4 68-18 10-2-65-86 12z" fill="#d52020" />
        {/* instrument transformers */}
        <g fill="#b3bad4">
          <path d="M475 410h17v40h-17zM508 426h18v30h-18z" />
          <path d="M457 428l12 4v56l-12 4z" />
          <path d="M468 438q6-14 20-12l38 6q10 8 6 26l-6 28-56 6z" />
          <ellipse cx="524" cy="462" rx="11" ry="24" fill="#959dbb" />
          <path d="M466 566q8-8 20-7l38 6q10 14 4 36l-16 12-46-6z" />
          <ellipse cx="520" cy="588" rx="10" ry="22" fill="#959dbb" />
          <ellipse cx="472" cy="690" rx="15" ry="30" />
        </g>
        <path d="M475 440l4 34M485 438l4 36M495 438l4 34" strokeWidth="5" />
        {/* breaker body and lower bars */}
        <g fill="#b3bad2">
          <path d="M575 567l65-10 18 60-75-10z" />
          <path d="M600 572l140 38M620 565l128 38" />
          <path d="M580 575l56-8 110 38-66 20z" />
          <path d="M646 612l34 13v108l-34-15z" />
          <path d="M680 627l68-5 2 96-70 14z" />
          <path d="M646 612l30-10 72 20-68 5z" />
          <path d="M538 580h22v80h-22zM582 645h26v50h-26z" fill="#8e95ad" />
        </g>
        <path d="M465 576q30 9 110-2v14h-80zM465 652h60l75-14v12l-72 16v92h-15v-94h-48z" fill="#d3c926" />
        <path d="M525 590l65-6 26 10v12l-34-8-54 10zM500 670l95-15 18 8v45h-14v-36l-43 12v75h-15v-73z" fill="#0ec126" />
        <path d="M505 625l45 2 40-20h50v45h-14v-30h-30l-42 21-49-4zM515 680h55l70-5 8 50-16-1-3-34-24 1v85h-15v-85h-75z" fill="#d51b28" />
        <g fill="#20252a">
          <path d="M463 668q35-7 42 28l-42 25z" />
          <ellipse cx="490" cy="703" rx="20" ry="21" />
        </g>
        <g fill="#8991ae">
          <ellipse cx="508" cy="703" rx="11" ry="18" />
        </g>
        {/* fasteners */}
        {frontBolts.map(([x, y]) => (
          <circle key={`f${x}-${y}`} cx={x} cy={y} r="8" fill="#55524e" strokeWidth="3" />
        ))}
        {darkBolts.map(([x, y]) => (
          <circle key={`d${x}-${y}`} cx={x} cy={y} r="8" fill="#302e2c" strokeWidth="3" />
        ))}
        {rimBolts.map(([x, y]) => (
          <circle key={`r${x}-${y}`} cx={x} cy={y} r="9" fill="#74716d" strokeWidth="3.500" />
        ))}
        <circle cx="316" cy="360" r="19" fill="#6c6965" strokeWidth="4" />
        {/* datum planes and local axes */}
        <path d="M177 1098V988l113-5v116M135 972v112M135 972l42 16" stroke="#c97c2b" />
        <path d="M175 1110V955" stroke="#5560cc" strokeWidth="3" />
        <path d="M175 938l-9 22h18z" fill="#1c2be0" stroke="none" />
        <path d="M173 880v22" stroke="#e0bf2c" strokeWidth="6" />
        <path d="M163 842h18l-18 22h18" stroke="#c97c2b" strokeWidth="3" />
        <path d="M175 1110l150-10" stroke="#d85b31" strokeWidth="4" />
        <path d="M323 1090l26 8-26 11z" fill="#ee2020" stroke="none" />
        <path d="M350 1098l30-2" />
        <path d="M376 1088l18 7-18 8z" fill="#b36f1d" stroke="none" />
        <path d="M417 1081l18 28M435 1080l-18 30" stroke="#c97c2b" strokeWidth="3" />
        <path d="M175 1110l-86-45" stroke="#b3aa4b" />
        <path d="M115 1077l18 13-18 3z" fill="#19bb35" stroke="none" />
        <path d="M84 1060l8 10 8-10M92 1070v12" stroke="#c97c2b" strokeWidth="3" />
      </g>
      {/* view triad */}
      <path d="M303 496v-32" stroke="#4646d2" strokeWidth="1.300" />
      <path d="M303 459l-2.500 8h5z" fill="#4646d2" />
      <path d="M303 496l32-2" stroke="#d83434" strokeWidth="1.300" />
      <path d="M339 493l-8-2v5z" fill="#d83434" />
      <path d="M303 496l-12-6" stroke="#34aa34" strokeWidth="1.300" />
      <path d="M288 488l7 1-3 4z" fill="#34aa34" />
      <g fontFamily="Noto Sans, sans-serif" fontSize="12">
        <text x="299" y="458" fill="#4040cc">Z</text>
        <text x="340" y="497" fill="#d83434">X</text>
        <text x="286" y="494" fill="#34aa34" fontSize="10">Y</text>
      </g>
    </svg>
  );
}

/* ---------- viewport ---------- */

const viewTools: { name: string; art: ReactNode; drop?: boolean; w: string }[] = [
  { name: "退出", w: "w-4", art: <path d="M2 2h12v12H2z" stroke="#c88" strokeWidth="1.300" /> },
  { name: "平面", w: "w-5", art: <path d="M1 3l6 3 8-3v8l-8 4-6-4z" fill="#4fb5a2" /> },
  { name: "画笔", w: "w-6", art: <path d="M14 1L4 11l-3 4 5-2L15 3z" fill="#8ca63e" /> },
  { name: "着色", w: "w-4", art: <path d="M1 6l7-4 7 4v6l-7 3-7-3z" fill="#e9b336" /> },
  {
    name: "实体",
    w: "w-6",
    drop: true,
    art: (
      <>
        <path d="M1 5l7-3 7 3v7l-7 4-7-4z" fill="#2186ab" />
        <path d="M1 5l7-3 7 3-7 3z" fill="#49b4cc" />
      </>
    ),
  },
  { name: "线框", w: "w-[25px]", drop: true, art: <path d="M1 4l7-3 7 3v8l-7 4-7-4zM1 4l7 3 7-3M8 7v9" fill="#fff" stroke="#9aa8af" strokeWidth="1.200" /> },
  {
    name: "光照",
    w: "w-[25px]",
    drop: true,
    art: (
      <>
        <path d="M1 5l7-4 7 4v7l-7 4-7-4z" fill="#f0a92c" />
        <path d="M1 5l7 4 7-4M8 9v7M4 3l8 10" stroke="#c8701f" strokeWidth="1.300" />
      </>
    ),
  },
  {
    name: "缩放",
    w: "w-[25px]",
    drop: true,
    art: (
      <>
        <path d="M0 0h16v16H0z" fill="#5aa9ae" />
        <circle cx="8" cy="8" r="5" fill="#f0e9bd" stroke="#e2a93b" strokeWidth="2" />
      </>
    ),
  },
  {
    name: "定向",
    w: "w-6",
    drop: true,
    art: (
      <>
        <path d="M8 1l6 7-6 7-6-7z" fill="#f2dcdc" stroke="#b96a6a" />
        <path d="M8 4v8M4 8h8" stroke="#c13a45" strokeWidth="1.600" />
      </>
    ),
  },
  {
    name: "截面",
    w: "w-4",
    art: (
      <>
        <path d="M1 1h14v14H1z" fill="#fff" stroke="#7fb7c2" strokeWidth="1.400" />
        <path d="M3 13l4-4M10 4h2" stroke="#2d7fa8" strokeWidth="1.500" />
      </>
    ),
  },
  {
    name: "测量",
    w: "w-[26px]",
    drop: true,
    art: (
      <>
        <path d="M3 1v11M13 1v11M3 6h10" stroke="#3496a8" strokeWidth="2" />
        <path d="M1 14h14" stroke="#d45348" strokeWidth="2" />
      </>
    ),
  },
  {
    name: "渲染",
    w: "w-[25px]",
    drop: true,
    art: (
      <>
        <path d="M1 1h14v12l-3 2H4l-3-2z" fill="#6c7483" />
        <path d="M3 5h11v4L3 11z" fill="#34457f" />
      </>
    ),
  },
];

function ViewToolbar() {
  return (
    <div className="relative flex h-[17px] shrink-0 items-center pl-[95px]">
      {viewTools.map((t) => (
        <button key={t.name} aria-label={t.name} className={`flex shrink-0 items-center gap-[3px] pl-[1px] ${t.w}`}>
          <Svg className="size-[11px]">{t.art}</Svg>
          {t.drop && <Caret />}
        </button>
      ))}
      <button aria-label="边线颜色" className="ml-[2px] h-[7px] w-[11px] shrink-0 bg-black" />
      <button aria-label="背景颜色" className="ml-[5px] size-[11px] shrink-0 border border-[#7a9ba8] bg-[#b9e6f4]" />
      <button aria-label="图层管理" className="ml-[5px] flex shrink-0 items-center gap-[3px]">
        <Svg className="size-3">
          <path d="M1 4l7-2 7 2-2 6-6 4-5-4z" fill="#32a9a4" />
          <path d="M1 4l7-2 7 2-7 4z" fill="#61cfc6" />
        </Svg>
        <Caret />
      </button>
      <div className="ml-[2px] flex h-[14px] w-[80px] shrink-0 items-center border border-[#d9dcde] bg-white pl-1">
        <Svg className="size-2">
          <path d="M5 11V9a5 5 0 1 1 6 0v5H5z" fill="#fff7b5" stroke="#a69b47" strokeWidth="1.400" />
        </Svg>
        <Svg className="ml-[2px] size-[9px]">
          <circle cx="8" cy="8" r="7" fill="#ece11f" stroke="#978f27" strokeWidth="1.400" />
        </Svg>
        <SelectBox label="图层" value="图层0000" className="h-3 w-[54px]" />
      </div>
    </div>
  );
}

function Viewport() {
  return (
    <main className="ml-1 flex min-w-0 flex-1 flex-col">
      <div className="flex h-[13px] shrink-0 items-stretch">
        <div className="flex w-[90px] items-center bg-[#fafbfb] pl-[22px] text-[8px] leading-[10px] whitespace-nowrap text-[#333]">
          * 进线.Z3ASM
          <button aria-label="关闭标签" className="ml-1">
            <Svg box="0 0 8 8" className="size-[6px]">
              <path d="M1 1l6 6M7 1L1 7" stroke="#666" strokeWidth="1.500" />
            </Svg>
          </button>
        </div>
        <button aria-label="标签列表" className="mr-1 ml-auto">
          <Svg box="0 0 8 8" className="size-[6px]">
            <path d="M0 1h8M1 4h6L4 7z" fill="#888" stroke="#888" />
          </Svg>
        </button>
      </div>
      <div className="relative flex min-h-0 flex-1 flex-col overflow-hidden bg-[linear-gradient(#fdfdfd_0%,#f1f1f1_12%,#d9d9d9_36%,#c9c9c9_56%,#b8b8b8_72%,#9b9b9b_100%)]">
        <Cabinet />
        <ViewToolbar />
        <div className="relative pl-3 text-[9px] leading-[11px] text-[#222]">
          <p>&lt;单击右键&gt;环境相关选项.</p>
          <p>&lt;Shift +鼠标右键&gt;显示选择过滤器.</p>
        </div>
        <output className="relative mt-auto pl-[2px] text-[12px] leading-4 text-[#222]">2820.34mm</output>
      </div>
    </main>
  );
}

/* ---------- right manager ---------- */

const dockIcons: { name: string; art: ReactNode }[] = [
  {
    name: "文件夹",
    art: (
      <>
        <path d="M0 3l4-3 4 3h12v13H0z" fill="#f1a927" />
        <path d="M0 6h20v9H0z" fill="#fcc83f" />
      </>
    ),
  },
  {
    name: "零件库",
    art: (
      <>
        <path d="M0 1h18v16H0z" fill="#f4bb3b" />
        <path d="M1 14l9-7 1-4 6-2-1 5-5 2-7 9z" fill="#1e6f93" />
      </>
    ),
  },
  { name: "屏柜", art: <path d="M2 2h6L6 15c8-1 10-6 11-12h3c0 10-7 15-19 15z" fill="#e08c2d" /> },
  {
    name: "数据库",
    art: (
      <>
        <ellipse cx="8" cy="4" rx="7" ry="3" stroke="#df9742" strokeWidth="1.500" />
        <path d="M1 4v12c1 3 8 3 10 2M15 4v5M1 8c2 3 12 3 14 0M1 12c2 3 8 3 10 1" stroke="#df9742" strokeWidth="1.500" />
        <path d="M11 19l9-9v9z" fill="#df8a2a" />
      </>
    ),
  },
  {
    name: "智能",
    art: (
      <>
        <path d="M3 7V1h11l5 5v13H3v-3" stroke="#df9742" strokeWidth="1.500" />
        <path d="M0 7h17v8H0z" fill="#df8a2a" />
        <path d="M4 13l2-4 2 4M11 9v4" stroke="#fff" />
      </>
    ),
  },
  {
    name: "图层",
    art: (
      <>
        <path d="M0 11l9-5 11 4-10 7z" fill="#2c8d91" />
        <path d="M0 8l9-4 11 3-10 6z" fill="#51c4bd" />
      </>
    ),
  },
  {
    name: "资源",
    art: (
      <>
        <path d="M0 3l5-2 3 2h12v13H0z" fill="#f2b231" />
        <circle cx="13" cy="11" r="5" fill="#3d7f93" stroke="#fff" />
        <path d="M13 11V6a5 5 0 0 1 5 5z" fill="#f5e8d7" />
      </>
    ),
  },
  {
    name: "颜色",
    art: (
      <>
        <path d="M1 6c4-8 11-5 12-2l-4 6-7-1z" fill="#2a7593" />
        <path d="M5 11h5v6H5z" fill="#c53636" />
        <path d="M10 11h5v6h-5z" fill="#3c9543" />
        <path d="M15 11h4v6h-4z" fill="#385dac" />
      </>
    ),
  },
];

function RightManager() {
  return (
    <aside className="flex w-[232px] shrink-0 flex-col">
      <div className="flex h-[13px] shrink-0 items-center pr-1 pl-[5px] text-[8px] leading-[10px] text-[#555]">
        管理器
        <PanelControls />
      </div>
      <div className="flex min-h-0 flex-1">
        <div className="flex min-w-0 flex-1 flex-col border-t border-r border-l border-[#cfd3d4] px-[7px] pt-[6px] pb-[7px]">
          <section className="flex flex-1 flex-col rounded-t-[3px] bg-white">
            <div className="flex h-8 shrink-0 items-center pr-[7px] pl-[9px]">
              <h2 className="text-[11px] leading-4 font-bold text-[#2f3947]">屏柜</h2>
              <button className="mr-[6px] ml-auto h-[18px] rounded-xs bg-[#fafafb] px-2 text-[9px] leading-3 font-bold text-[#3a8dd6]">新建</button>
              <button className="h-[18px] rounded-xs bg-[#fafafb] px-2 text-[9px] leading-3 font-bold text-[#3a8dd6]">打开</button>
            </div>
            <input aria-label="搜索文件和文件夹" placeholder="搜索文件和文件夹..." className="h-5 min-w-0 border-y border-[#e2e4e5] px-[6px] text-[9px] leading-3 placeholder:text-[#777]" />
            <ul className="pt-[5px] pl-2 text-[8px] leading-[17px] text-[#444]">
              <li className="flex h-[17px] items-center">
                <button aria-label="折叠节点">
                  <Svg className="size-[9px]">
                    <path d="M8 0v3M3 3h10v10H3zM6 8h4M0 8h3M13 8h3" stroke="#aaa" strokeWidth="1.500" />
                  </Svg>
                </button>
                <Svg className="mr-[6px] ml-1 size-[11px]">
                  <path d="M2 1h10l3 4v10H2z" fill="#dda347" stroke="#5b452c" strokeWidth="1.700" />
                  <path d="M5 5h6v2l-3 5-3-5z" fill="#6e4b25" />
                </Svg>
                SP_样例
              </li>
              <li className="flex h-[17px] items-center pl-[17px]">
                <Svg className="size-2">
                  <path d="M2 0v8h12" stroke="#bbb" strokeWidth="1.500" />
                </Svg>
                <Svg className="mr-1 ml-[3px] size-[11px]">
                  <path d="M4 0h8v16H4z" fill="#2c89aa" stroke="#466470" />
                  <path d="M6 3h4v4H6zM6 10h4v3H6z" fill="#bde5ee" />
                </Svg>
                进线柜
              </li>
            </ul>
          </section>
        </div>
        <nav className="flex w-[19px] shrink-0 flex-col border-t border-[#cfd3d4]">
          {dockIcons.map((d) => (
            <button key={d.name} aria-label={d.name} className={`flex h-[34px] items-center overflow-hidden pl-[2px] ${d.name === "屏柜" ? "bg-white" : ""}`}>
              <Svg box="0 0 20 20" className="size-[17px]">
                {d.art}
              </Svg>
            </button>
          ))}
        </nav>
      </div>
    </aside>
  );
}

/* ---------- status bar ---------- */

function StatusBar() {
  return (
    <footer className="flex h-[18px] shrink-0 items-center pl-1 text-[8px] leading-3 text-[#555]">
      选择命令或实体
      <div className="ml-auto flex w-[314px] items-center self-stretch border-l border-[#c4c9ca] pl-[9px]">
        <button aria-label="输出窗口" className="mr-[5px] flex size-[15px] items-center justify-center border border-[#dfb750] bg-[#f8dd93]">
          <Svg>
            <path d="M1 2h14v12H1z" fill="#e9edf2" stroke="#66749b" strokeWidth="1.400" />
            <path d="M1 2h14v3H1z" fill="#6278aa" />
            <path d="M10 7v5" stroke="#a43c45" strokeWidth="2" />
          </Svg>
        </button>
        <button aria-label="显示窗口" className="mr-[5px] flex size-[15px] items-center justify-center border border-[#dfb750] bg-[#f8dd67]">
          <Svg>
            <path d="M1 3h14v8H1zM6 12h4v2H6z" fill="#2fb1bd" stroke="#2d5b62" strokeWidth="1.200" />
          </Svg>
        </button>
        <button aria-label="消息窗口" className="mr-[6px] flex size-[14px] items-center justify-center">
          <Svg>
            <path d="M1 2h14v12H1z" fill="#dce3f5" stroke="#7685b5" strokeWidth="1.400" />
            <path d="M1 2h14v3H1z" fill="#7789c0" />
          </Svg>
        </button>
        <input aria-label="命令行" className="h-[14px] min-w-0 flex-1 bg-white px-1" />
      </div>
    </footer>
  );
}

/* ---------- overlays ---------- */

function Overlays() {
  return (
    <>
      <div role="tooltip" className="absolute top-[89px] left-[336px] h-[52px] w-[87px] border border-[#a9abb0] bg-gradient-to-b from-white to-[#e2e3ee] pt-1 pl-[5px] text-[8px] leading-[15px] whitespace-nowrap text-[#444] shadow-sm">
        <p className="font-bold text-[#222]">3D识别</p>
        <p>3D识别</p>
        <p>按F1键获取更多信息</p>
      </div>
      <div className="pointer-events-none absolute top-[34px] left-[300px] h-[114px] w-[130px] border-4 border-[#fa2c10]" />
      <div className="pointer-events-none absolute right-[33px] bottom-[26px] flex items-center gap-2 text-black/30">
        <svg viewBox="0 0 41 34" className="h-[34px] w-[41px]" fill="currentColor" aria-hidden="true">
          <path
            fillRule="evenodd"
            d="M15 0C6.500 0 0 5.500 0 12.500c0 4 2.200 7.400 5.600 9.700L4.300 26.500l5-2.600c1.900.6 4 .9 6.400.8-1.500-7.700 5-14 13.700-13.800C28 4.500 22 0 15 0zM10 7a2 2 0 1 0 0 4 2 2 0 0 0 0-4zm10 0a2 2 0 1 0 0 4 2 2 0 0 0 0-4z"
          />
          <path
            fillRule="evenodd"
            d="M29 12c-7 0-12 4.500-12 10.200s5 10.300 12 10.300c1.500 0 3-.2 4.200-.6l4.200 2.100-1.100-3.600c3-1.900 4.700-4.900 4.700-8.200C41 16.500 36 12 29 12zm-4 5.500a1.700 1.700 0 1 0 0 3.400 1.700 1.700 0 0 0 0-3.400zm8 0a1.700 1.700 0 1 0 0 3.400 1.700 1.700 0 0 0 0-3.400z"
          />
        </svg>
        <span className="text-[31px] leading-8 whitespace-nowrap">服务号 · 利驰电小二</span>
      </div>
    </>
  );
}

export default function App() {
  return (
    <div className="relative h-screen overflow-hidden bg-white pt-[3px] pr-[2px] pb-[6px] pl-px font-['Noto_Sans','Noto_Sans_CJK_SC',sans-serif]">
      <div className="flex h-full flex-col overflow-hidden bg-[#e1e6e6]">
        <TitleBar />
        <TabBar />
        <Ribbon />
        <SelectionBar />
        <div className="flex min-h-0 flex-1">
          <LeftManager />
          <Viewport />
          <RightManager />
        </div>
        <StatusBar />
      </div>
      <Overlays />
    </div>
  );
}
